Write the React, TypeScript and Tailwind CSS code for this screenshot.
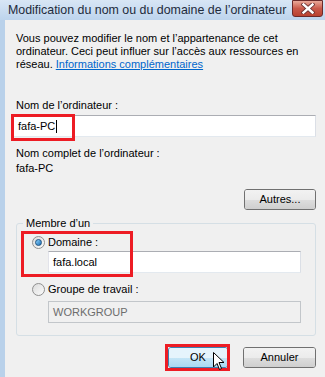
import React from "react";

function Radio({ checked }: { checked?: boolean }) {
  return (
    <span className="relative flex h-[13px] w-[13px] shrink-0 items-center justify-center rounded-full border border-[#8f8f8f] bg-gradient-to-br from-[#dcdcdc] to-[#fbfbfb]">
      {checked && (
        <span className="h-[7px] w-[7px] rounded-full border border-[#1c5180] bg-gradient-to-br from-[#8ad4ff] to-[#1a6fb5]" />
      )}
    </span>
  );
}

function Button({ children, primary, className = "" }: { children: React.ReactNode; primary?: boolean; className?: string }) {
  return (
    <div
      className={
        "relative flex h-[21px] items-center justify-center overflow-hidden rounded-[3px] border text-[11px] text-black " +
        (primary ? "border-[#3c7fb1] " : "border-[#707070] ") +
        className
      }
    >
      <div className="absolute inset-0 flex flex-col">
        <div className={"h-1/2 " + (primary ? "bg-[#e5f4fc]" : "bg-gradient-to-b from-[#f2f2f2] to-[#ebebeb]")} />
        <div className={"h-1/2 " + (primary ? "bg-gradient-to-b from-[#c4e5f6] to-[#a9d9f3]" : "bg-gradient-to-b from-[#dddddd] to-[#cfcfcf]")} />
      </div>
      <span className="relative">{children}</span>
    </div>
  );
}

export default function App() {
  return (
    <div
      className="flex h-[377px] w-[325px] flex-col overflow-hidden bg-[#b9d1ea] text-[11px] text-black"
      style={{ fontFamily: '"Liberation Sans", Arial, sans-serif' }}
    >
      {/* title bar */}
      <div className="flex h-[20px] shrink-0 items-center justify-between bg-gradient-to-b from-[#d8e6f5] to-[#bdd4ed] pl-[8px] pr-[2px]">
        <span className="text-[12.4px] leading-none text-[#1e2b3c]">Modification du nom ou du domaine de l’ordinateur</span>
        <div className="-mt-[3px] flex h-[17px] w-[31px] items-center justify-center rounded-b-[3px] border border-[#6b2a2a] bg-gradient-to-b from-[#e9a99a] via-[#c9594a] to-[#b9412f]">
          <svg width="14" height="11" viewBox="0 0 14 11">
            <path d="M2.5 1.5 L11.5 9.5 M11.5 1.5 L2.5 9.5" stroke="#6a3030" strokeWidth="4.2" strokeLinecap="square" />
            <path d="M2.5 1.5 L11.5 9.5 M11.5 1.5 L2.5 9.5" stroke="#ffffff" strokeWidth="2.4" strokeLinecap="square" />
          </svg>
        </div>
      </div>

      <div className="flex min-h-0 flex-1">
        <div className="w-[5px] shrink-0 bg-[#b9d1ea]" />
        <div className="relative flex-1 bg-[#f0f0f0] pl-[8px] pr-[9px] pt-[12px]">
          <p className="ml-[3px] whitespace-nowrap leading-[13px]">
            Vous pouvez modifier le nom et l’appartenance de cet
            <br />
            ordinateur. Ceci peut influer sur l’accès aux ressources en
            <br />
            réseau. <span className="text-[#0066cc] underline">Informations complémentaires</span>
          </p>

          <div className="ml-[3px] mt-[28px] leading-[13px]">Nom de l’ordinateur :</div>
          <div className="relative mt-[3px] flex h-[22px] items-center border border-[#abadb3] border-b-[#e3e9ef] border-l-[#e2e3ea] border-r-[#dbdfe6] bg-white pl-[4px]">
            fafa-PC<span className="ml-px h-[13px] w-px bg-black" />
            <div className="absolute -left-[3px] -top-[2px] h-[27px] w-[64px] border-[3px] border-[#ed1c24]" />
          </div>

          <div className="ml-[3px] mt-[10px] leading-[13px]">Nom complet de l’ordinateur :</div>
          <div className="ml-[3px] mt-[2px] leading-[13px]">fafa-PC</div>

          <div className="mt-[14px] flex justify-end">
            <Button className="w-[72px]">Autres...</Button>
          </div>

          {/* group box */}
          <div className="relative ml-[3px] mt-[13px] h-[113px] rounded-[3px] border border-[#d5dfe5] pl-[15px] pt-[12px]">
            <span className="absolute -top-[7px] left-[6px] bg-[#f0f0f0] px-[3px] leading-[13px]">Membre d’un</span>
            <div className="relative flex flex-col">
              <div className="flex items-center gap-[3px]">
                <Radio checked />
                <span className="leading-[13px]">Domaine :</span>
              </div>
              <div className="ml-[16px] mt-[2px] flex h-[22px] w-[253px] items-center border border-[#abadb3] border-b-[#e3e9ef] border-l-[#e2e3ea] border-r-[#dbdfe6] bg-white pl-[4px]">
                fafa.local
              </div>
              <div className="absolute -left-[11px] -top-[5px] h-[46px] w-[112px] border-[3px] border-[#ed1c24]" />

              <div className="mt-[10px] flex items-center gap-[3px]">
                <Radio />
                <span className="leading-[13px]">Groupe de travail :</span>
              </div>
              <div className="ml-[16px] mt-[5px] flex h-[22px] w-[253px] items-center border border-[#c2c6ca] bg-[#f0f0f0] pl-[4px] text-[#6d6d6d]">
                WORKGROUP
              </div>
            </div>
          </div>

          <div className="mt-[11px] flex justify-end gap-[15px]">
            <div className="relative">
              <Button primary className="w-[60px]">OK</Button>
              <div className="absolute -left-[3px] -top-[3px] h-[27px] w-[65px] border-[3px] border-[#ed1c24]" />
              <svg className="absolute left-[45px] top-[5px]" width="12" height="19" viewBox="0 0 12 19">
                <path d="M0.5 0.5 L0.5 15 L4 11.5 L6.5 17.5 L8.5 16.5 L6 10.5 L11 10.5 Z" fill="#ffffff" stroke="#000000" strokeWidth="1" strokeLinejoin="round" />
              </svg>
            </div>
            <Button className="w-[73px]">Annuler</Button>
          </div>
        </div>
      </div>
    </div>
  );
}
